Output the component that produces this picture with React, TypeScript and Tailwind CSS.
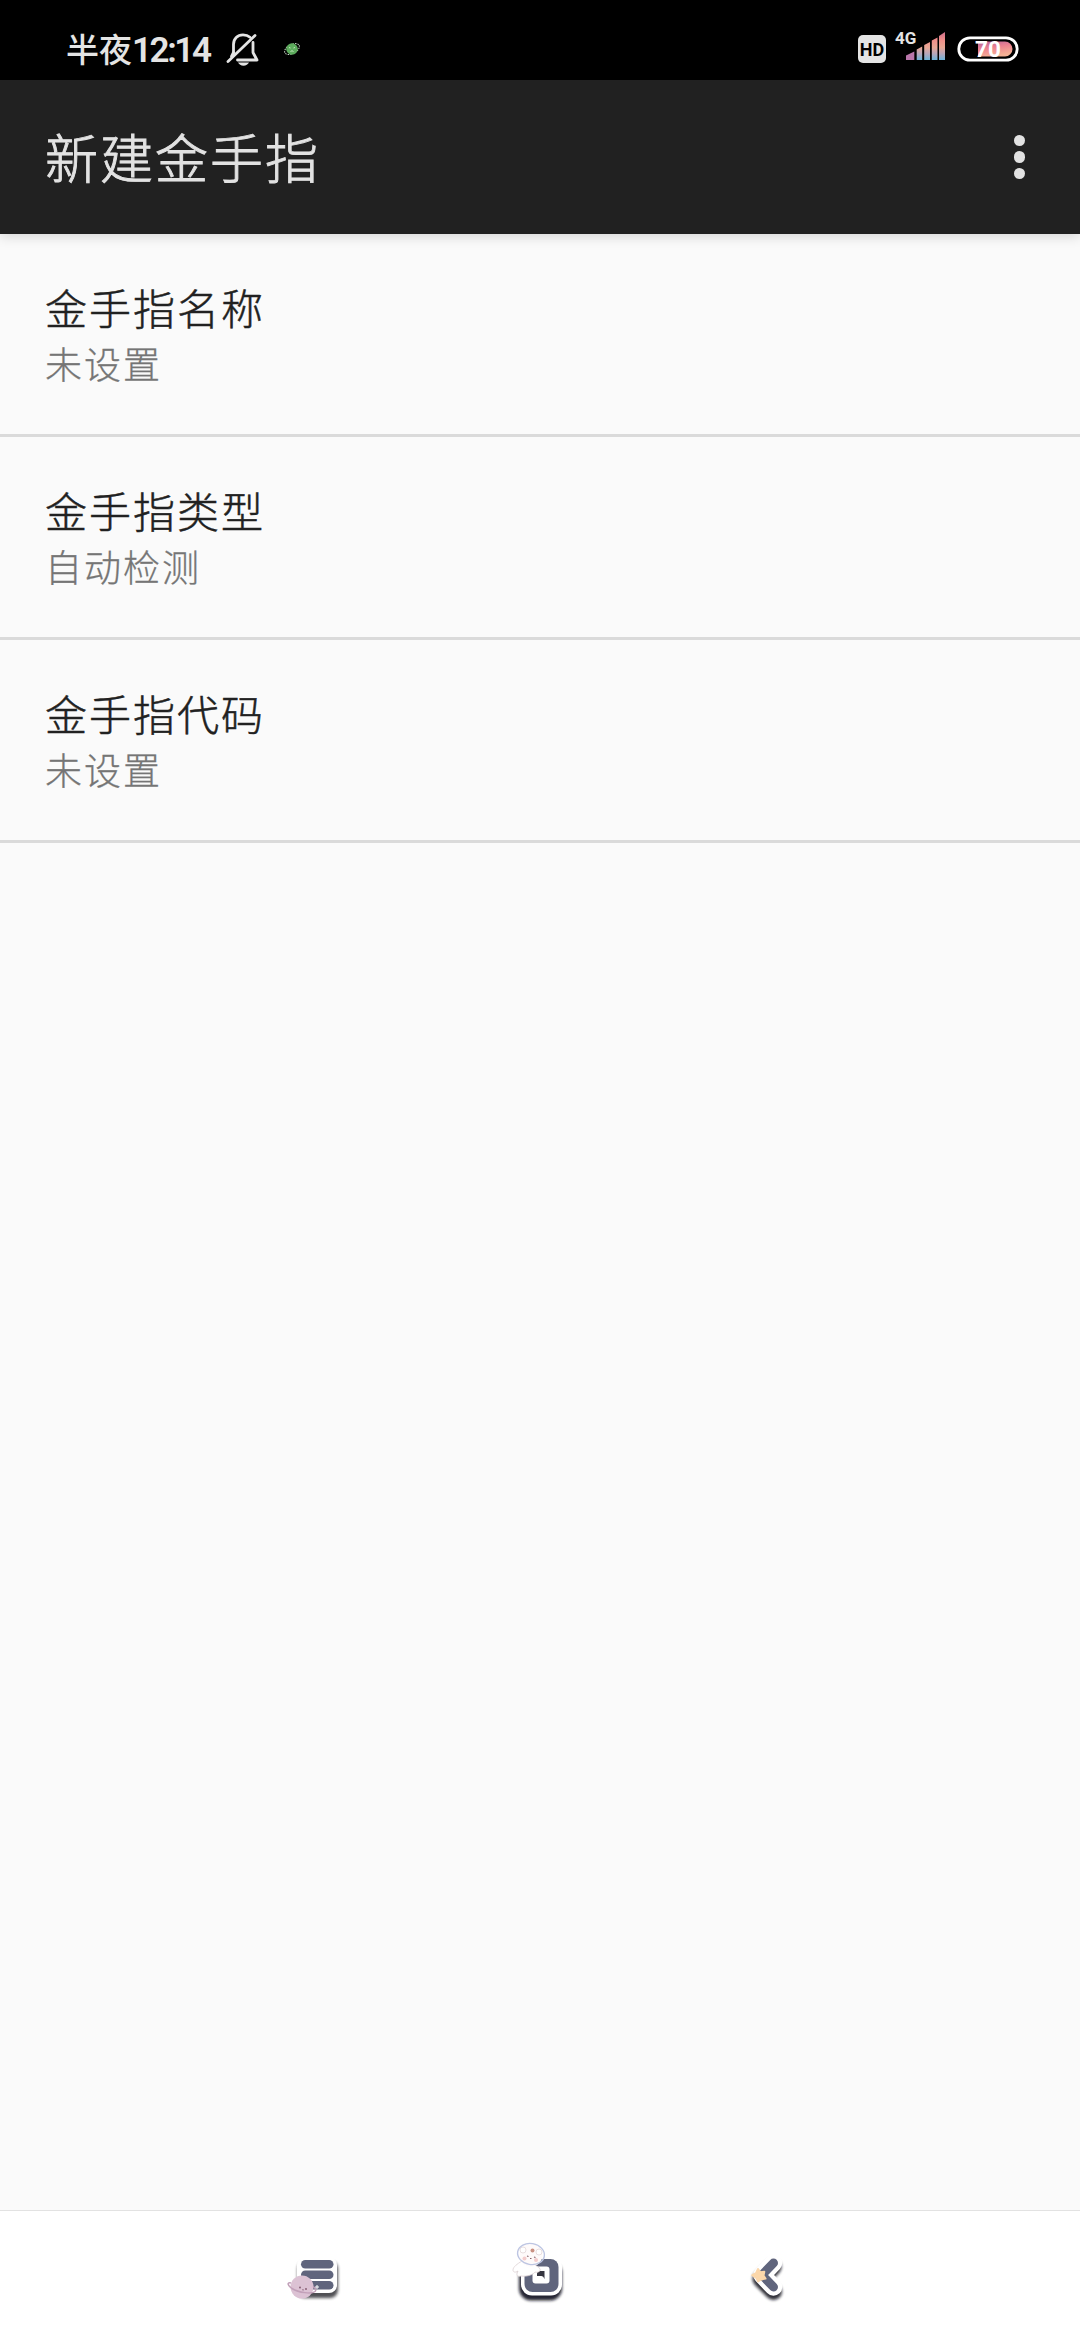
import React from "react";

const rows = [
  { title: "金手指名称", value: "未设置" },
  { title: "金手指类型", value: "自动检测" },
  { title: "金手指代码", value: "未设置" },
];

function MutedBell() {
  return (
    <svg width="34" height="34" viewBox="0 0 34 34" fill="none" stroke="#e4e4e4" strokeWidth="2.8" strokeLinecap="round" strokeLinejoin="round">
      <path d="M7.500 19.500V11.500C7.500 5.500 11.500 1.800 17 1.800c3 0 5.200.8 7 2.400" />
      <path d="M27 9.500V19.500l4 7.500H11.500" />
      <path d="M7.500 19.500L5.500 23.500" />
      <path d="M29 2.500L2 28.500" />
      <path d="M12 29.500h11c-1 2-3 3.200-5.500 3.200s-4.500-1.200-5.500-3.200z" fill="#e4e4e4" stroke="none" />
    </svg>
  );
}

function PlanetDot() {
  return (
    <svg width="18" height="16" viewBox="0 0 18 16">
      <ellipse cx="9" cy="8" rx="8" ry="4.500" transform="rotate(-28 9 8)" fill="none" stroke="#c9d8c8" strokeWidth="1" strokeDasharray="1.500 1" />
      <circle cx="9" cy="8" r="5.800" fill="#5cab5c" />
      <path d="M6 6.500l1.500.5M12 6.500l-1.500.5M7.500 10.500q1.500-1.500 3 0" stroke="#c4e6bd" strokeWidth="1" fill="none" />
    </svg>
  );
}

function Signal() {
  return (
    <svg width="40" height="30" viewBox="0 0 40 30">
      <defs>
        <linearGradient id="sig" x1="0" y1="0" x2="0" y2="30" gradientUnits="userSpaceOnUse">
          <stop offset="0" stopColor="#c9688a" />
          <stop offset=".32" stopColor="#f0918a" />
          <stop offset=".55" stopColor="#e8a795" />
          <stop offset=".75" stopColor="#b9a6b9" />
          <stop offset="1" stopColor="#60b5de" />
        </linearGradient>
      </defs>
      <path d="M0 24.500L8.300 20.500V29H0z" fill="#b976aa" />
      <path d="M10.700 18.500L16.200 15.500V29H10.700zM18.200 14L24 11V29H18.200zM25.800 9.500L31.500 6.500V29H25.800zM33 5L39 1V29H33z" fill="url(#sig)" />
    </svg>
  );
}

function Battery() {
  return (
    <svg width="62" height="26" viewBox="0 0 62 26">
      <defs>
        <linearGradient id="bat" x1="0" y1="0" x2=".4" y2="1">
          <stop offset="0" stopColor="#b3639c" />
          <stop offset=".5" stopColor="#ee8290" />
          <stop offset="1" stopColor="#f5b195" />
        </linearGradient>
      </defs>
      <rect x="1.800" y="1.800" width="58.400" height="22.400" rx="11.200" fill="none" stroke="#fff" strokeWidth="2.800" />
      <path d="M21 5.500H48a7.500 7.500 0 0 1 0 15H21z" fill="url(#bat)" />
      <text x="31" y="20.500" textAnchor="middle" fontFamily="Roboto, sans-serif" fontWeight="700" fontSize="22.500" fill="#fff">70</text>
    </svg>
  );
}

function RecentsIcon() {
  return (
    <svg width="90" height="90" viewBox="0 0 90 90">
      <defs>
        <filter id="soft" filterUnits="userSpaceOnUse" x="0" y="0" width="90" height="90"><feGaussianBlur stdDeviation="1.500" /></filter>
      </defs>
      <rect x="27.500" y="31" width="40.500" height="37" rx="8" fill="#17171f" opacity=".75" filter="url(#soft)" />
      <rect x="27" y="27" width="40" height="36" rx="8" fill="#fff" />
      <g fill="#60657d">
        <rect x="31" y="30" width="32.500" height="8.500" rx="4.250" />
        <rect x="31" y="40.500" width="32.500" height="8.500" rx="4.250" />
        <rect x="31" y="51" width="32.500" height="8.500" rx="4.250" />
      </g>
      <circle cx="32" cy="57" r="11.500" fill="#dcc2d4" />
      <path d="M21 53c-4-1-4 2 1 5.500 7 4.500 20 5.500 23 3 2-2-.5-4-2-5" fill="none" stroke="#c2a0b9" strokeWidth="1.500" />
      <circle cx="30" cy="57.500" r=".9" fill="#80576e" />
      <circle cx="36" cy="59" r=".9" fill="#80576e" />
      <path d="M32 59.500l1 .6 1-.4" stroke="#80576e" fill="none" strokeWidth=".7" />
      <path d="M47 55v4M45 57h4" stroke="#fff" strokeWidth="1" />
    </svg>
  );
}

function HomeIcon() {
  return (
    <svg width="90" height="90" viewBox="0 0 90 90">
      <rect x="19" y="31" width="43" height="39.500" rx="12" fill="#10101a" opacity=".9" filter="url(#soft)" />
      <rect x="21" y="26" width="41" height="39.500" rx="11" fill="#fff" />
      <rect x="24.500" y="29" width="34" height="33" rx="8" fill="#60657d" />
      <rect x="32.500" y="36.500" width="17" height="17" rx="3" fill="#fff" />
      <path d="M37 44q0-3 3-3h4.500v8q-1-3-3-3H37z" fill="#353540" />
      <path d="M22 31c-5 3-9 6-9 9 0 2 2 3 5 1-2 4-1 6 3 5 7 1 13-2 14-4 3 1 6-1 5-3-1-3-6-3-7-6z" fill="#fff" stroke="#ddd2d4" strokeWidth=".8" />
      <circle cx="31" cy="25" r="11.500" fill="#fefafa" />
      <circle cx="23" cy="20" r="3" fill="#fff" stroke="#ded1d3" strokeWidth=".7" />
      <circle cx="39" cy="22" r="3" fill="#fff" stroke="#ded1d3" strokeWidth=".7" />
      <ellipse cx="31" cy="24" rx="13.500" ry="10.500" transform="rotate(10 31 24)" fill="none" stroke="#bdc5e2" strokeWidth="1.400" />
      <circle cx="32.500" cy="20.500" r="2" fill="#c99183" />
      <circle cx="24.500" cy="28.500" r="2" fill="#f4cccc" />
      <circle cx="36" cy="30" r="2" fill="#f4cccc" />
      <path d="M27 26l1.500.5M34 27l1.500.5M30 28.500h1.500" stroke="#856069" strokeWidth="1.100" />
    </svg>
  );
}

function BackIcon() {
  return (
    <svg width="90" height="90" viewBox="0 0 90 90" fill="none" strokeLinecap="round" strokeLinejoin="round">
      <path d="M43 37L31 49L43.500 61.500" stroke="#111119" strokeWidth="17" opacity=".85" filter="url(#soft)" />
      <path d="M43.500 33L32 45L43.500 57" stroke="#fff" strokeWidth="17.500" />
      <path d="M43.500 33L32 45L43.500 57" stroke="#60657d" strokeWidth="9" />
      <path d="M28 39l2.300 3.200 4-.5-.8 3.900 2 3-4 .8-3.500 2-1.700-3.500-4-2.700 3.700-2z" fill="#fbd7ab" stroke="#fbd7ab" strokeWidth="2" />
    </svg>
  );
}

export default function App() {
  return (
    <div className="flex h-[2340px] w-[1080px] flex-col overflow-hidden bg-[#fafafa] font-['Noto_Sans_CJK_SC',sans-serif]">
      <header className="flex h-20 shrink-0 items-start justify-between bg-black pl-[66px] pr-[61px]">
        <div className="flex items-start">
          <div className="mt-[23px] flex h-[50px] w-[160px] items-baseline whitespace-nowrap text-[33px] font-medium leading-[50px] text-[#e4e4e4]">
            <span>半夜</span>
            <span className="font-['Roboto',sans-serif] text-[35px] font-semibold tracking-[-2.4px]">12:14</span>
          </div>
          <div className="mt-[33px]"><MutedBell /></div>
          <div className="ml-[23px] mt-[41px]"><PlanetDot /></div>
        </div>
        <div className="flex items-start">
          <div className="mt-[35px] flex h-7 w-7 items-center justify-center whitespace-nowrap rounded-[5px] bg-[#e4e4e4] pt-px font-['Roboto',sans-serif] text-[18px] font-bold leading-7 text-black">HD</div>
          <div className="ml-[9px] mr-[-11px] mt-[30px] w-[22px] whitespace-nowrap font-['Roboto',sans-serif] text-[17px] font-bold leading-[17px] text-[#e4e4e4]">4G</div>
          <div className="mt-[31px]"><Signal /></div>
          <div className="ml-[11px] mt-[36px]"><Battery /></div>
        </div>
      </header>

      <div className="z-10 flex h-[154px] shrink-0 items-center justify-between bg-[#212121] pl-[45px] pr-[55px] shadow-[0_2px_12px_rgba(0,0,0,0.16)]">
        <h1 className="mt-[-2px] text-[53px] font-light leading-[60px] tracking-[2px] text-[#e2e2e2] [-webkit-text-stroke:0.9px_#e2e2e2]">新建金手指</h1>
        <button aria-label="更多" className="flex flex-col gap-[5px]">
          <span className="size-[11.5px] rounded-full bg-[#e2e2e2]" />
          <span className="size-[11.5px] rounded-full bg-[#e2e2e2]" />
          <span className="size-[11.5px] rounded-full bg-[#e2e2e2]" />
        </button>
      </div>

      <main className="flex-1">
        {rows.map((row) => (
          <div key={row.title} className="h-[203px] border-b-[3px] border-[#dadada] pl-[45px] pt-[45px]">
            <div className="text-[42px] font-light leading-[56px] tracking-[2px] text-[#212121] [-webkit-text-stroke:0.5px_#212121]">{row.title}</div>
            <div className="text-[37px] font-light leading-[56px] tracking-[2px] text-[#757575] [-webkit-text-stroke:0.3px_#757575]">{row.value}</div>
          </div>
        ))}
      </main>

      <nav className="flex h-[130px] shrink-0 gap-[140px] border-t border-[#e2e2e2] bg-white pl-[270px] pt-[19px]">
        <RecentsIcon />
        <HomeIcon />
        <BackIcon />
      </nav>
    </div>
  );
}
